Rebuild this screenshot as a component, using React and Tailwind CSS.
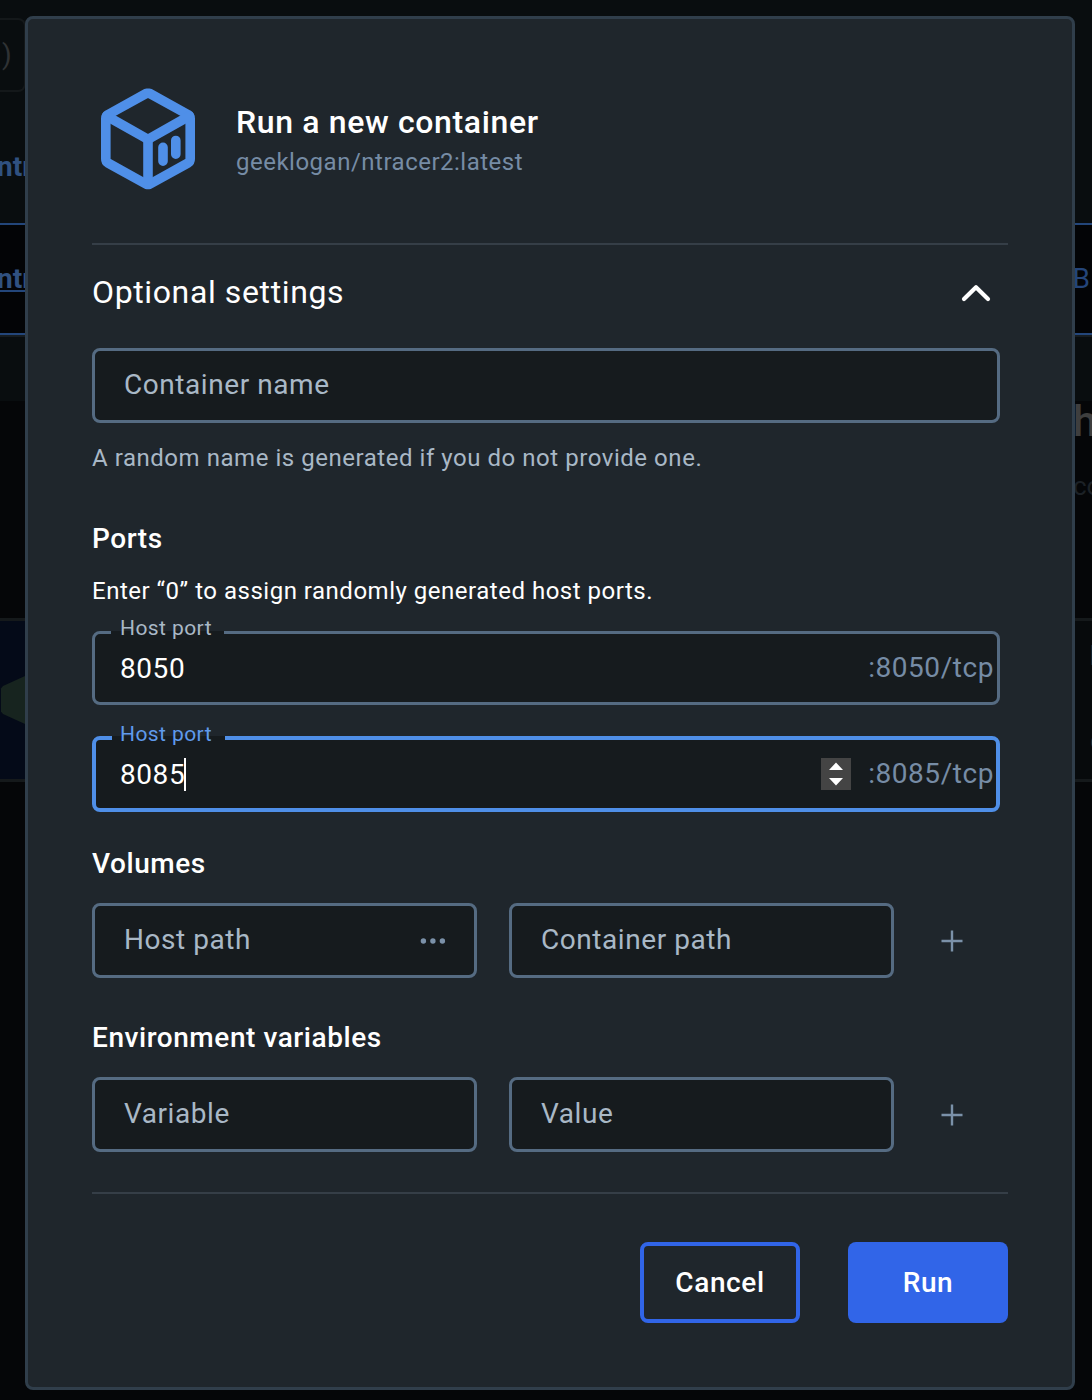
import React from "react";

function CubeIcon() {
  return (
    <svg width="112" height="112" viewBox="0 0 112 112" fill="none" className="shrink-0">
      <g stroke="#4f8fe8" strokeWidth="9.6" strokeLinejoin="round" strokeLinecap="round">
        <path d="M54.6 10.2 H57.4 L96 31.6 Q98.2 33 98.2 35.5 V76 Q98.2 78.6 96 80 L57.4 101.4 H54.6 L16 80 Q13.8 78.6 13.8 76 V35.5 Q13.8 33 16 31.6 Z" />
        <path d="M14.6 33 L56 56.4 L97.4 33" />
        <path d="M56 57 V100" />
        <path d="M71 64.3 V78.2 M83.8 57.5 V71.2" />
      </g>
    </svg>
  );
}

function PlusIcon() {
  return (
    <svg width="22" height="22" viewBox="0 0 22 22" className="shrink-0">
      <path d="M11 0.5 V21.5 M0.5 11 H21.5" stroke="#7b91a9" strokeWidth="2.4" />
    </svg>
  );
}

function Field({ label, className = "", children }) {
  return (
    <div
      className={`flex h-[75px] items-center justify-between rounded-[8px] border-[3px] border-[#556b82] bg-[#161b1e] pr-7 pl-[29px] text-[28px] tracking-[0.56px] text-[#a9b8c6] ${className}`}
    >
      <span className="relative -top-px">{label}</span>
      {children}
    </div>
  );
}

function PortField({ value, focused }) {
  return (
    <div
      className={
        focused
          ? "relative mt-[31px] flex h-[76px] w-[908px] items-center rounded-[8px] border-4 border-[#4f8fe8] bg-[#161b1e] pr-[2px] pl-6 text-[28px]"
          : "relative mt-6 flex h-[74px] w-[908px] items-center rounded-[8px] border-[3px] border-[#556b82] bg-[#161b1e] pr-[3px] pl-[25px] text-[28px]"
      }
    >
      <span
        className={
          focused
            ? "absolute -top-1 left-4 h-1 w-[113px] bg-[#161b1e]"
            : "absolute -top-[3px] left-4 h-[3px] w-[113px] bg-[#161b1e]"
        }
      />
      <span
        className={
          focused
            ? "absolute -top-[20px] left-6 text-[21px] leading-7 tracking-[0.42px] text-[#5f9aec]"
            : "absolute -top-[20px] left-[25px] text-[21px] leading-7 tracking-[0.42px] text-[#a9b8c6]"
        }
      >
        Host port
      </span>
      <span className="mt-[2px] tracking-[0.56px] text-white">{value}</span>
      {focused && <span className="-ml-px h-[33px] w-[2px] bg-white" />}
      <span className="ml-auto flex items-center">
        {focused && (
          <svg width="30" height="32" viewBox="0 0 30 32" className="mr-[17px]">
            <rect width="30" height="32" fill="#444444" />
            <path d="M15 4.6 L22 12 H8 Z M15 27.4 L22 20 H8 Z" fill="#fff" />
          </svg>
        )}
        <span className="tracking-[0.56px] text-[#768ca5]">:{value}/tcp</span>
      </span>
    </div>
  );
}

function Backdrop() {
  return (
    <div className="flex h-full flex-col bg-[#050608] text-[28px]">
      <div className="h-[223px] bg-[#090d0f]">
        <div className="h-[18px]" />
        <div className="flex h-[74px] w-[26px] items-center rounded-r-[8px] border-2 border-l-0 border-[#14181a] text-[#2f3234]">
          <span className="ml-[2px]">)</span>
        </div>
        <div className="mt-[58px] -ml-[3px] leading-[34px] font-bold text-[#305180]">ntracer2</div>
      </div>
      <div className="flex h-[112px] items-center justify-between border-y-2 border-[#23467a] bg-[#030406]">
        <div className="-ml-[3px] border-b-2 border-[#23467a] pt-px leading-[23px] font-bold text-[#305180]">ntracer2</div>
        <span className="mr-[2px] text-[#24457a]">B</span>
      </div>
      <div className="h-[66px] border-t-2 border-[#161c20] bg-[#090d0f]" />
      <div className="flex h-[217px] flex-col">
        <span className="mt-[-5px] ml-[1073px] text-[43px] leading-[50px] font-medium text-[#3e3e3e]">h</span>
        <span className="mt-6 ml-[1073px] text-[26px] leading-8 text-[#1c2126]">co</span>
      </div>
      <div className="flex h-[164px] justify-between border-y-[3px] border-[#15191b] bg-[#070a0c]">
        <div className="flex w-12 items-center bg-[#040a18]">
          <svg width="48" height="72" viewBox="0 0 48 72">
            <path d="M1 24.5 L3 22 L47 2 V70 L3 50 L1 47.5 Z" fill="#17241f" />
          </svg>
        </div>
        <div className="flex w-[2px] flex-col overflow-hidden text-[#303234]">
          <span className="mt-[18px] -ml-px leading-[34px]">I</span>
          <span className="mt-[51px] leading-[34px]">c</span>
        </div>
      </div>
    </div>
  );
}

export default function App() {
  return (
    <div className="relative h-[1400px] w-[1092px] overflow-hidden font-[Roboto,sans-serif]">
      <Backdrop />
      <div className="absolute top-4 left-[25px] flex h-[1374px] w-[1050px] flex-col rounded-[8px] border-[3px] border-[#303e4b] bg-[#1f262c] px-16 pt-16">
        <header className="flex h-[160px] shrink-0 items-start gap-8">
          <CubeIcon />
          <div className="pt-[19px]">
            <h1 className="text-[32px] leading-10 font-medium tracking-[0.64px] text-white">Run a new container</h1>
            <p className="text-[24px] leading-10 tracking-[0.5px] text-[#768ca5]">geeklogan/ntracer2:latest</p>
          </div>
        </header>
        <div className="h-[2px] w-full shrink-0 bg-[#353e47]" />

        <div className="flex h-[94px] items-center justify-between pr-[17px]">
          <h2 className="text-[32px] tracking-[0.62px] text-white">Optional settings</h2>
          <svg width="30" height="20" viewBox="0 0 30 20" fill="none" className="mt-[2px]">
            <path d="M3 16 L15 4.2 L27 16" stroke="#fff" strokeWidth="4.2" strokeLinecap="round" strokeLinejoin="round" />
          </svg>
        </div>
        <Field label="Container name" className="mt-[9px] w-[908px]" />
        <p className="mt-[19px] text-[24px] leading-8 tracking-[0.54px] text-[#a9b8c6]">
          A random name is generated if you do not provide one.
        </p>

        <h3 className="mt-[49px] text-[28px] leading-[31px] font-medium tracking-[0.56px] text-white">Ports</h3>
        <p className="mt-[21px] text-[24px] leading-8 tracking-[0.51px] text-white">
          Enter “0” to assign randomly generated host ports.
        </p>
        <PortField value="8050" />
        <PortField value="8085" focused />

        <h3 className="mt-9 text-[28px] leading-[31px] font-medium tracking-[0.56px] text-white">Volumes</h3>
        <div className="mt-6 flex items-center">
          <Field label="Host path" className="w-[385px]">
            <svg width="26" height="6" viewBox="0 0 26 6" fill="#7b91a9">
              <circle cx="3.4" cy="3" r="2.7" />
              <circle cx="12.9" cy="3" r="2.7" />
              <circle cx="22.4" cy="3" r="2.7" />
            </svg>
          </Field>
          <Field label="Container path" className="mr-[47px] ml-8 w-[385px]" />
          <PlusIcon />
        </div>

        <h3 className="mt-11 text-[28px] leading-[31px] font-medium tracking-[0.56px] text-white">
          Environment variables
        </h3>
        <div className="mt-6 flex items-center">
          <Field label="Variable" className="w-[385px]" />
          <Field label="Value" className="mr-[47px] ml-8 w-[385px]" />
          <PlusIcon />
        </div>

        <div className="mt-10 h-[2px] w-full shrink-0 bg-[#353e47]" />
        <footer className="mt-12 flex justify-end gap-12">
          <button className="h-[81px] w-40 rounded-[8px] border-4 border-[#3165e8] text-[28px] font-medium tracking-[0.6px] text-white">
            Cancel
          </button>
          <button className="h-[81px] w-40 rounded-[8px] bg-[#3165e8] text-[28px] font-medium tracking-[0.6px] text-white">
            Run
          </button>
        </footer>
      </div>
    </div>
  );
}
